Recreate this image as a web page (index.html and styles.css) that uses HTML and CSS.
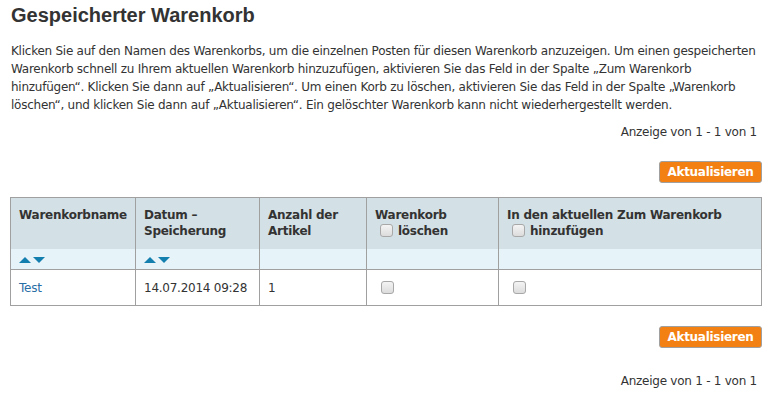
FILE: index.html
```html
<!doctype html>
<html lang="de">
<head>
  <meta charset="utf-8">
  <title>Gespeicherter Warenkorb</title>
  <link rel="stylesheet" href="styles.css">
</head>
<body>
  <div id="page">
    <h1>Gespeicherter Warenkorb</h1>
    <p class="intro">Klicken Sie auf den Namen des Warenkorbs, um die einzelnen Posten für diesen Warenkorb anzuzeigen. Um einen gespeicherten Warenkorb schnell zu Ihrem aktuellen Warenkorb hinzuzufügen, aktivieren Sie das Feld in der Spalte „Zum Warenkorb hinzufügen“. Klicken Sie dann auf „Aktualisieren“. Um einen Korb zu löschen, aktivieren Sie das Feld in der Spalte „Warenkorb löschen“, und klicken Sie dann auf „Aktualisieren“. Ein gelöschter Warenkorb kann nicht wiederhergestellt werden.</p>

    <div class="paging top">Anzeige von 1 - 1 von 1</div>
    <div class="actions top"><button class="btn">Aktualisieren</button></div>

    <table class="carts">
      <colgroup>
        <col class="c_name">
        <col class="c_date">
        <col class="c_count">
        <col class="c_del">
        <col class="c_add">
      </colgroup>
      <thead>
        <tr class="head_row">
          <th>Warenkorbname</th>
          <th>Datum –<br>Speicherung</th>
          <th>Anzahl der<br>Artikel</th>
          <th>Warenkorb<br><span class="cb"></span> löschen</th>
          <th>In den aktuellen Zum Warenkorb<br><span class="cb"></span> hinzufügen</th>
        </tr>
        <tr class="sort_row">
          <td><span class="sort"><i class="up"></i><i class="down"></i></span></td>
          <td><span class="sort"><i class="up"></i><i class="down"></i></span></td>
          <td></td>
          <td></td>
          <td></td>
        </tr>
      </thead>
      <tbody>
        <tr class="item_row">
          <td><a href="#">Test</a></td>
          <td>14.07.2014 09:28</td>
          <td>1</td>
          <td><span class="cb"></span></td>
          <td><span class="cb"></span></td>
        </tr>
      </tbody>
    </table>

    <div class="actions bottom"><button class="btn">Aktualisieren</button></div>
    <div class="paging bottom">Anzeige von 1 - 1 von 1</div>
  </div>
</body>
</html>
```
FILE: styles.css
```css
* {
  margin: 0; padding: 0;
  box-sizing: border-box;
}
body {
  background: #fff;
  font-family: 'DejaVu Sans', Verdana, sans-serif;
  font-size: 12px;
  letter-spacing: -0.25px;
  color: #333;
}
#page {
  padding: 0 11px 0 10px;
  width: 773px;
}
h1 {
  font-family: 'Liberation Sans', Arial, sans-serif;
  font-size: 20px;
  font-weight: bold;
  letter-spacing: 0;
  color: #333;
  line-height: 24px;
  padding: 3px 0 0 1px;
}
.intro {
  margin-top: 15px;
  padding-left: 1px;
  line-height: 18px;
}
.paging {
  text-align: right;
  padding-right: 5px;
  line-height: 18px;
}
.paging.top {
  margin-top: 9px;
}
.paging.bottom {
  margin-top: 24px;
}
.actions {
  display: flex;
  justify-content: flex-end;
}
.actions.top {
  margin-top: 20px;
}
.actions.bottom {
  margin-top: 20px;
}
.btn {
  background: #f38012;
  border: 1px solid #a0a0a0;
  border-radius: 3px;
  color: #fff;
  font-family: 'DejaVu Sans', Verdana, sans-serif;
  font-size: 12px;
  font-weight: bold;
  letter-spacing: -0.3px;
  height: 22px;
  width: 103px;
  padding: 0;
}
.carts {
  margin-top: 14px;
  width: 752px;
  table-layout: fixed;
  border-collapse: collapse;
  border: 1px solid #a0a0a0;
}
.c_name { width: 125px; }
.c_date { width: 124px; }
.c_count { width: 107px; }
.c_del { width: 132px; }
.carts th, .carts td {
  border-left: 1px solid #a0a0a0;
  border-right: 1px solid #a0a0a0;
  text-align: left;
  vertical-align: top;
  padding: 0 8px;
  white-space: nowrap;
}
.head_row {
  height: 51px;
}
.carts th {
  background: #d3e0e5;
  color: #333;
  font-weight: bold;
  line-height: 16px;
  padding-top: 9px;
}
.sort_row {
  height: 21px;
}
.sort_row td {
  background: #e6f3f8;
  border-bottom: 1px solid #a0a0a0;
  padding-top: 8px;
}
.sort {
  display: flex;
  gap: 2px;
}
.sort i {
  display: block;
  width: 0; height: 0;
  border-left: 6px solid transparent;
  border-right: 6px solid transparent;
}
.sort .up {
  border-bottom: 6px solid #137fae;
}
.sort .down {
  border-top: 6px solid #137fae;
}
.item_row {
  height: 36px;
}
.item_row td {
  vertical-align: middle;
}
.item_row a {
  color: #2a6ea6;
  text-decoration: none;
}
.cb {
  display: inline-block;
  width: 13px; height: 13px;
  border: 1px solid #a8a8a8;
  border-radius: 3px;
  background: linear-gradient(#f4f4f4, #dcdcdc);
  vertical-align: -2px;
  margin-left: 5px;
}
th .cb {
  margin-right: 1px;
}
.item_row .cb {
  margin-left: 6px;
}
```
